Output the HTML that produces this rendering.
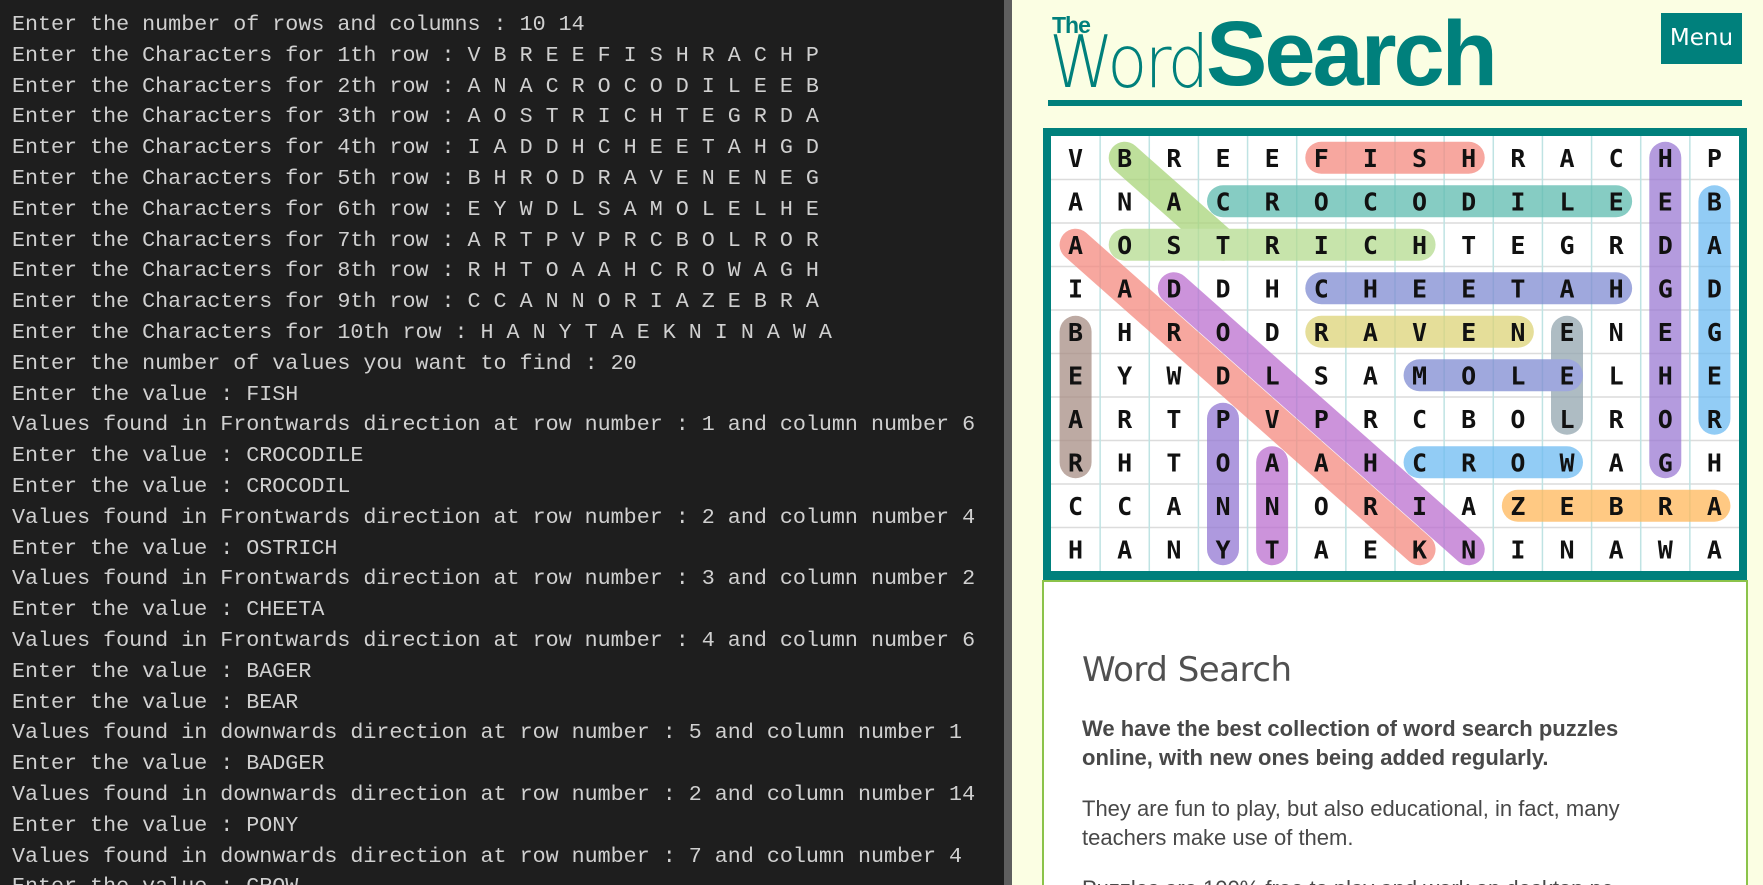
<!DOCTYPE html>
<html><head><meta charset="utf-8"><style>
*{margin:0;padding:0;box-sizing:border-box}
html{overflow:hidden;height:885px}
body{width:1763px;height:885px;overflow:hidden;background:#fbfee3;position:relative;font-family:"Liberation Sans",sans-serif}
#term{position:absolute;left:0;top:0;width:1004px;height:885px;overflow:hidden;background:#1e1e1e;color:#d0d0d0;font-family:"Liberation Mono",monospace;font-size:21.7px;line-height:30.8px;padding:10px 0 0 12px;white-space:pre}
#strip{position:absolute;left:1004px;top:0;width:8px;height:885px;background:#5e5e5e}
.logo{position:absolute;color:#00807c;white-space:nowrap}
#menu{position:absolute;left:1661px;top:13px;width:81px;height:51px;background:#00807c;color:#fff;font-size:23px;line-height:51px;text-align:center;font-family:"DejaVu Sans",sans-serif}
#bar{position:absolute;left:1048px;top:100px;width:694px;height:6px;background:#00807c}
#grid{position:absolute;left:1043px;top:128px;width:704px;height:452px;background:#00807c}
#box{position:absolute;left:1042px;top:580px;width:706px;height:305px;overflow:hidden;background:#fff;border:2px solid #8bc34a;border-bottom:none;color:#4a4a4a}
</style></head><body>
<div id="term">Enter the number of rows and columns : 10 14
Enter the Characters for 1th row : V B R E E F I S H R A C H P
Enter the Characters for 2th row : A N A C R O C O D I L E E B
Enter the Characters for 3th row : A O S T R I C H T E G R D A
Enter the Characters for 4th row : I A D D H C H E E T A H G D
Enter the Characters for 5th row : B H R O D R A V E N E N E G
Enter the Characters for 6th row : E Y W D L S A M O L E L H E
Enter the Characters for 7th row : A R T P V P R C B O L R O R
Enter the Characters for 8th row : R H T O A A H C R O W A G H
Enter the Characters for 9th row : C C A N N O R I A Z E B R A
Enter the Characters for 10th row : H A N Y T A E K N I N A W A
Enter the number of values you want to find : 20
Enter the value : FISH
Values found in Frontwards direction at row number : 1 and column number 6
Enter the value : CROCODILE
Enter the value : CROCODIL
Values found in Frontwards direction at row number : 2 and column number 4
Enter the value : OSTRICH
Values found in Frontwards direction at row number : 3 and column number 2
Enter the value : CHEETA
Values found in Frontwards direction at row number : 4 and column number 6
Enter the value : BAGER
Enter the value : BEAR
Values found in downwards direction at row number : 5 and column number 1
Enter the value : BADGER
Values found in downwards direction at row number : 2 and column number 14
Enter the value : PONY
Values found in downwards direction at row number : 7 and column number 4
Enter the value : CROW</div>
<div id="strip"></div>
<div class="logo" style="left:1052px;top:12px;font-size:23px;font-weight:bold;letter-spacing:-1px">The</div>
<div class="logo" style="left:1049px;top:20px;font-size:72px;font-family:'DejaVu Sans',sans-serif;font-weight:300;letter-spacing:-3px;transform:scaleX(0.91);transform-origin:left">Word</div>
<div class="logo" style="left:1206px;top:2px;font-size:92px;font-weight:bold;letter-spacing:-3px">Search</div>
<div id="menu">Menu</div>
<div id="bar"></div>
<div id="grid">
<svg width="688" height="435" style="position:absolute;left:8px;top:8px;background:#fff" xmlns="http://www.w3.org/2000/svg">
<g stroke="#dcdcdc" stroke-width="1.5">
<line x1="0" y1="43.5" x2="688" y2="43.5"/><line x1="0" y1="87" x2="688" y2="87"/><line x1="0" y1="130.5" x2="688" y2="130.5"/><line x1="0" y1="174" x2="688" y2="174"/><line x1="0" y1="217.5" x2="688" y2="217.5"/><line x1="0" y1="261" x2="688" y2="261"/><line x1="0" y1="304.5" x2="688" y2="304.5"/><line x1="0" y1="348" x2="688" y2="348"/><line x1="0" y1="391.5" x2="688" y2="391.5"/>
</g>
<g stroke="#bfe3e3" stroke-width="1.5" id="vl"></g>
<g stroke-linecap="round" stroke-width="32" opacity="0.75" id="hl"></g>
<g id="tx" font-family="DejaVu Sans Mono,monospace" font-weight="bold" font-size="25" text-anchor="middle" fill="#111"></g>
</svg>
</div>
<div id="box">
<div style="position:absolute;left:38px;top:68px;font-size:34px;color:#505050;font-family:'DejaVu Sans',sans-serif;letter-spacing:-0.5px">Word Search</div>
<div style="position:absolute;left:38px;top:132px;width:590px;font-size:22px;line-height:29px;font-weight:bold;color:#484848">We have the best collection of word search puzzles online, with new ones being added regularly.</div>
<div style="position:absolute;left:38px;top:212px;width:620px;font-size:22px;line-height:29px;color:#484848">They are fun to play, but also educational, in fact, many teachers make use of them.</div>
<div style="position:absolute;left:38px;top:292px;width:700px;font-size:22px;line-height:29px;color:#484848">Puzzles are 100% free to play and work on desktop pc</div>
</div>
<script>
var rows=["VBREEFISHRACHP","ANACROCODILEEB","AOSTRICHTEGRDA","IADDHCHEETAHGD","BHRODRAVENENEG","EYWDLSAMOLELHE","ARTPVPRCBOLROR","RHTOAAHCROWAGH","CCANNORIAZEBRA","HANYTAEKNINAWA"];
var W=688/14,H=43.5,ns="http://www.w3.org/2000/svg";
var vl=document.getElementById("vl");
for(var c=1;c<14;c++){var l=document.createElementNS(ns,"line");l.setAttribute("x1",c*W);l.setAttribute("x2",c*W);l.setAttribute("y1",0);l.setAttribute("y2",435);vl.appendChild(l);}
var segs=[[0,4,0,7,"#a88e85"],[1,0,3,2,"#a9d57a"],[5,0,8,0,"#f58a80"],[12,0,12,7,"#9b7ad3"],[3,1,11,1,"#5ebcb0"],[13,1,13,6,"#6ebbf2"],[1,2,7,2,"#b5dc90"],[0,2,7,9,"#f58a80"],[2,3,8,9,"#bb6fd0"],[5,3,11,3,"#7f8cd2"],[5,4,9,4,"#ddd378"],[10,4,10,6,"#93a6b0"],[7,5,10,5,"#7f8cd2"],[3,6,3,9,"#9478d3"],[4,7,4,9,"#bb6fd0"],[7,7,10,7,"#6ebbf2"],[9,8,13,8,"#ffb85a"]];
var hl=document.getElementById("hl");
segs.forEach(function(s){var l=document.createElementNS(ns,"line");l.setAttribute("x1",(s[0]+.5)*W);l.setAttribute("y1",(s[1]+.5)*H);l.setAttribute("x2",(s[2]+.5)*W);l.setAttribute("y2",(s[3]+.5)*H);l.setAttribute("stroke",s[4]);hl.appendChild(l);});
var tx=document.getElementById("tx");
rows.forEach(function(r,i){for(var c=0;c<14;c++){var t=document.createElementNS(ns,"text");t.setAttribute("x",(c+.5)*W);t.setAttribute("y",(i+.5)*H+9);t.textContent=r[c];tx.appendChild(t);}});
</script>
</body></html>
